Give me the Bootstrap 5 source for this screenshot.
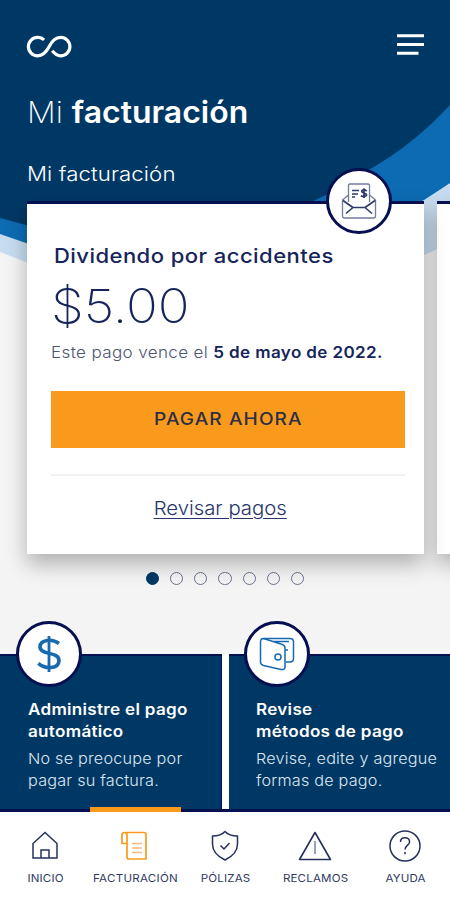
<!DOCTYPE html>
<html lang="es">
<head>
<meta charset="utf-8">
<meta name="viewport" content="width=device-width, initial-scale=1">
<title>Mi facturación</title>
<link href="https://cdn.jsdelivr.net/npm/bootstrap@5.3.0/dist/css/bootstrap.min.css" rel="stylesheet">
<style>
:root{--navy:#003865;--ink:#15245a;--edge:#060f4f;--orange:#fa9a1c}
body{font-family:Inter,"Liberation Sans",sans-serif;background:#f4f4f4;color:var(--ink);overflow:hidden}
.fit{white-space:nowrap;line-height:1}
/* widens the letterforms; --w is the horizontal factor */
.wide{transform:scaleX(var(--w));transform-origin:left}
.wide-mid{display:inline-block;transform:scaleX(var(--w))}
.screen{width:450px;height:900px;overflow:hidden;isolation:isolate}
.backdrop{top:0;left:0;z-index:-1}
.top-bar{padding:34px 26px 0 26px;height:62px}
.page-title{--w:1.065;font-size:30px;font-weight:200;margin:35px 0 0 27px;height:30px}
.page-title b{font-weight:600}
.sub-title{--w:1.11;font-size:20px;font-weight:350;margin:37px 0 0 27px;height:20px;letter-spacing:.1px}
.slides{margin:17px 0 0 27px;gap:13px;height:353px}
.bill{width:397px;flex:none;background:#fff;border-top:3px solid var(--edge);box-shadow:0 10px 20px rgba(0,0,0,.28);padding:0 19px 0 24px}
.bill.next{z-index:-1}
.disc{width:66px;height:66px;border:3.5px solid var(--edge);background:#fff}
.disc-mail{left:299px;top:-36px}
.bill-name{--w:1.1;font-size:20px;font-weight:500;letter-spacing:.42px;margin:42px 0 0 3px}
.amount{--w:1.12;font-size:47px;font-weight:200;margin:16px 0 0 0}
.due{--w:1.1;font-size:15.5px;font-weight:300;letter-spacing:.33px;margin:16px 0 0 0;color:#4c5473}
.due b{font-weight:600;color:var(--ink)}
.pay{--w:1.12;height:57px;margin-top:30px;background:var(--orange);color:#2b3044;font-size:17px;font-weight:500;border-radius:0;border:0;letter-spacing:1px}
.rule{height:2px;background:#f1f1f2;margin-top:26px}
.review{--w:1.07;font-size:19px;font-weight:300;color:#26346a;text-underline-offset:3px;text-decoration-thickness:1px;margin:23px 16px 0 0}
.dots{margin-top:18px;gap:11px;height:14px}
.dots span{width:13.1px;height:13.1px;border:1.4px solid #6b7293;border-radius:50%}
.dots .on{background:var(--navy);border-color:var(--navy)}
.tiles{margin-top:68px;height:158px;border-bottom:3px solid var(--edge);gap:7px;background:linear-gradient(#fff,#fff) 222px 0/7px 100% no-repeat}
.tile{background:var(--navy);border-top:2px solid var(--edge);color:#fff;width:222px;flex:none;padding:43px 0 0 28px;border-right:1px solid var(--edge)}
.tile + .tile{padding-left:27px}
.tile .disc{top:-35px;left:16px}
.tile + .tile .disc{left:15px}
.tile h2{--w:1.09;font-size:15.7px;font-weight:600;line-height:22px;margin:0;white-space:nowrap;letter-spacing:.26px}
.tile p{--w:1.08;font-size:15px;font-weight:350;line-height:22px;margin:5px 0 0;white-space:nowrap;color:#dfe6f0;letter-spacing:.2px}
.tabs{height:88px;background:#fff}
.tabs a{width:90px;flex:none;padding-top:16px;color:#30395f;font-size:10.5px;font-weight:400;text-decoration:none;letter-spacing:.15px}
.tabs a span{--w:1.1;display:block;margin-top:10px;padding-left:1px}
.tabs .current span{letter-spacing:.25px}
.tabs .current::before{content:"";position:absolute;left:0;top:-5px;width:91px;height:5px;background:var(--orange)}
</style>
<script src="https://cdn.jsdelivr.net/npm/bootstrap@5.3.0/dist/js/bootstrap.bundle.min.js"></script>
</head>
<body>
<main class="screen position-relative d-flex flex-column">
  <svg class="backdrop position-absolute" width="450" height="280" viewBox="0 0 450 280">
    <path d="M0 0H450V240Q440 249 424 255Q200 310 26 262L0 252Z" fill="#c7dcee"/>
    <path d="M0 0H450V183Q438 191 424 200Q220 300 26 243L0 234Z" fill="#0d6bb3"/>
    <path d="M0 0H450V105Q415 143 372 168Q345 187 313 201Q170 258 26 225L0 218Z" fill="#003865"/>
  </svg>

  <header class="top-bar d-flex justify-content-between align-items-start">
    <svg width="46" height="26" viewBox="-.8 0 46 26" fill="none" stroke="#fff" stroke-width="3.2"><path d="M17.3 5.800C14.500 3.100 11.600 3.400 10.800 3.400A9.200 9.200 0 0 0 10.800 21.800C17 21.800 20 17.200 22.400 12.600C24.600 8.200 28 3.400 33.900 3.400A9.200 9.200 0 0 1 33.900 21.800C30 21.800 27.500 19.400 25.400 16.800"/></svg>
    <svg width="28" height="22" viewBox="0 0 28 22"><path d="M1 1.800H28M1 10.500H28M1 19.200H22.500" stroke="#fff" stroke-width="3"/></svg>
  </header>
  <h1 class="page-title wide fit text-white">Mi <b>facturación</b></h1>
  <div class="sub-title wide fit text-white">Mi facturación</div>

  <section class="slides d-flex">
    <article class="bill position-relative d-flex flex-column">
      <div class="disc disc-mail rounded-circle position-absolute d-flex align-items-center justify-content-center">
        <svg width="36" height="38" viewBox="0 0 36 38" fill="none" stroke="#2d3a6d" stroke-width="1.3" stroke-linejoin="round">
          <path d="M7.500 20V3.500Q7.500 2 9 2H27Q28.500 2 28.500 3.500V20M7.500 13L1.500 18V34Q1.500 36 3.500 36H32.500Q34.500 36 34.500 34V18L28.500 13" stroke="#737b9c"/>
          <path d="M2 18.500L12 25.500M24 25.500L34 18.500M12 25.500H24M12 25.500L5 31.500M24 25.500L31 31.500" stroke-width="1.600"/>
          <path d="M11 8.500H18M11 12H17M11 15H14" stroke-width="1.600"/>
          <path d="M25.800 9Q23 7 21 8.500C19.400 11.200 26 10.500 25.500 13.300Q23.500 15.700 19.800 13.800M23 6.300V16" stroke-width="1.700"/>
        </svg>
      </div>
      <h2 class="bill-name wide fit mb-0">Dividendo por accidentes</h2>
      <div class="amount wide fit">$5.00</div>
      <p class="due wide fit mb-0">Este pago vence el <b>5 de mayo de 2022.</b></p>
      <button class="pay btn w-100 fit flex-shrink-0" type="button"><span class="wide-mid">PAGAR AHORA</span></button>
      <div class="rule"></div>
      <a class="review wide-mid fit align-self-center" href="#">Revisar pagos</a>
    </article>
    <article class="bill next position-relative"></article>
  </section>

  <div class="dots d-flex justify-content-center">
    <span class="on"></span><span></span><span></span><span></span><span></span><span></span><span></span>
  </div>

  <section class="tiles d-flex flex-shrink-0">
    <article class="tile position-relative">
      <div class="disc rounded-circle position-absolute d-flex align-items-center justify-content-center">
        <svg width="26" height="40" viewBox="0 0 26 40" fill="none" stroke="#1769b0" stroke-width="3.600"><path d="M23 9.500C16 4.300 4.500 5.500 4 12.600C3.700 21.700 23.200 17 23 26.800C22.500 35 9.500 35.500 2.300 29.300"/><path d="M13 2V38" stroke-width="2.800"/></svg>
      </div>
      <h2 class="wide">Administre el pago<br>automático</h2>
      <p class="wide">No se preocupe por<br>pagar su factura.</p>
    </article>
    <article class="tile position-relative">
      <div class="disc rounded-circle position-absolute d-flex align-items-center justify-content-center">
        <svg width="38" height="36" viewBox="0 0 38 36" fill="none" stroke="#1769b0" stroke-width="1.500" stroke-linejoin="round">
          <path d="M5.500 2.500H32Q35.500 2.500 35.500 6V22.500Q35.500 26 32 26H27.500"/>
          <path d="M5.500 2.500Q2.500 2.500 2.500 6V26Q2.500 28.500 5.500 29.500L23 33.500Q27 34 27 31V12Q27 9 23 8L5.500 2.500M14 5.500H31M27 14H30"/>
          <circle cx="20" cy="21" r="3"/>
        </svg>
      </div>
      <h2 class="wide">Revise<br>métodos de pago</h2>
      <p class="wide">Revise, edite y agregue<br>formas de pago.</p>
    </article>
  </section>

  <nav class="tabs d-flex flex-shrink-0 text-center">
    <a href="#" class="fit"><svg width="36" height="36" viewBox="0 0 36 36" fill="none" stroke="#26305f" stroke-width="1.500"><path d="M6 15.500L18 4.500L30 15.500V30H6ZM14 30V22H22V30"/></svg><span class="wide-mid">INICIO</span></a>
    <a href="#" class="fit current position-relative"><svg width="36" height="36" viewBox="0 0 36 36" fill="none" stroke="#fa9a1c" stroke-width="1.700" stroke-linejoin="round"><path d="M7 4.500H27Q29 4.500 29 6.500V31H12Q10 31 10 29V7Q10 4.500 7.500 4.500Q5 4.500 5 7V15.500H10"/><path d="M15 15.500H25M15 20H25M15 24.500H25" stroke="#f7b98a"/></svg><span class="wide-mid">FACTURACIÓN</span></a>
    <a href="#" class="fit"><svg width="36" height="36" viewBox="0 0 36 36" fill="none" stroke="#26305f" stroke-width="1.500" stroke-linejoin="round"><path d="M18 3.500Q22 8 30.500 8V16Q30.500 26 18 32Q5.500 26 5.500 16V8Q14 8 18 3.500ZM13.500 17.500L17 21L22.500 15"/></svg><span class="wide-mid">PÓLIZAS</span></a>
    <a href="#" class="fit"><svg width="36" height="36" viewBox="0 0 36 36" fill="none" stroke="#26305f" stroke-width="1.600" stroke-linejoin="round"><path d="M18 4.500L33.500 31.500H2.500Z"/><path d="M18 13V26" stroke="#8288a4"/></svg><span class="wide-mid">RECLAMOS</span></a>
    <a href="#" class="fit"><svg width="36" height="36" viewBox="0 0 36 36" fill="none" stroke="#26305f" stroke-width="1.500"><circle cx="18" cy="18" r="15"/><path d="M13.500 14Q13.500 9.800 18 9.800T22.600 14C22.600 17 18 17.500 18 21.500M18 24V26.300"/></svg><span class="wide-mid">AYUDA</span></a>
  </nav>
</main>
</body>
</html>
